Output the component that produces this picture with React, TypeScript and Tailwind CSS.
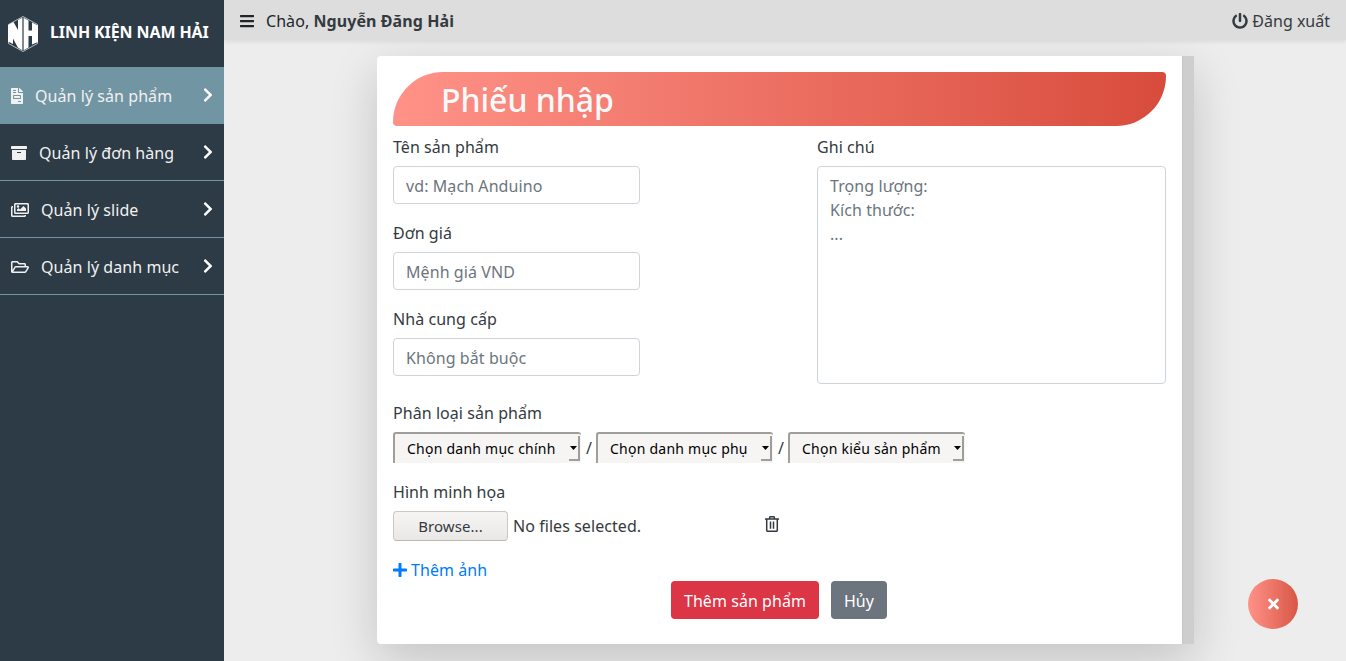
import React from "react";
import {
  FaArchive,
  FaBars,
  FaChevronRight,
  FaFileInvoice,
  FaPlus,
  FaPowerOff,
  FaRegFolderOpen,
  FaRegImages,
  FaTimes,
} from "react-icons/fa";

const menu = [
  { label: "Quản lý sản phẩm", Icon: FaFileInvoice, iconClass: "w-3", active: true },
  { label: "Quản lý đơn hàng", Icon: FaArchive, iconClass: "w-4", active: false },
  { label: "Quản lý slide", Icon: FaRegImages, iconClass: "w-[18px]", active: false },
  { label: "Quản lý danh mục", Icon: FaRegFolderOpen, iconClass: "w-[18px]", active: false },
];

const categories = [
  { label: "Chọn danh mục chính", width: "w-[188px]" },
  { label: "Chọn danh mục phụ", width: "w-[177px]" },
  { label: "Chọn kiểu sản phẩm", width: "w-[177px]" },
];

function Logo() {
  return (
    <svg viewBox="0 0 30 36" className="h-9 w-[30px] shrink-0">
      <path d="M15 0.5 29.5 8.5V27.5L15 35.5 0.5 27.5V8.5Z" fill="none" stroke="#d5dadd" strokeWidth="0.8" />
      <path d="M0 9 5.500 6 10 14V4L14.400 1.800V34.200L10 31.800 5 22.500V28L0 25.500Z" fill="#fff" />
      <path d="M15.600 1.800 20.500 4.500V14.500H24V6.500L30 9.500V26L24 28.500V20H20.500V31.500L15.600 34.200Z" fill="#fff" />
    </svg>
  );
}

function TrashIcon() {
  return (
    <svg viewBox="0 0 14 16" className="h-4 w-3.5" fill="none" stroke="#343a40" strokeWidth="1.5">
      <path d="M0 3H14M4.300 2.700 5 .8H9L9.700 2.700M1.700 3V14.200Q1.700 15.300 2.800 15.300H11.200Q12.300 15.300 12.300 14.200V3M5.500 5.500V12.800M8.500 5.500V12.800" />
    </svg>
  );
}

function Field({ label, placeholder }: { label: string; placeholder: string }) {
  return (
    <label className="mb-[17px] block">
      <span className="mb-[7px] block leading-6">{label}</span>
      <input
        placeholder={placeholder}
        className="block h-[38px] w-[247px] rounded border border-[#ced4da] bg-white px-3 pt-[7px] pb-[5px] tracking-[0.08px] placeholder:text-[#6c757d]"
      />
    </label>
  );
}

function CategorySelect({ label, width }: { label: string; width: string }) {
  return (
    <button
      type="button"
      className={`${width} flex h-[31px] items-start justify-between rounded-t-[3px] border-t-2 border-l-2 border-[#a09e9c] bg-[#f6f5f4] pl-3 text-left text-sm text-black`}
    >
      <span className="pt-[5px] leading-5 tracking-[0.24px] whitespace-nowrap">{label}</span>
      <span className="mt-0.5 mr-[1px] -ml-2 flex h-[25px] w-[11px] items-start justify-center border-r-2 border-b-2 border-[#a09e9c] pt-[10px]">
        <svg viewBox="0 0 7 4" className="h-1 w-[7px] shrink-0">
          <path d="M0 0H7L3.500 4Z" fill="#000" />
        </svg>
      </span>
    </button>
  );
}

export default function App() {
  return (
    <div className="flex h-[661px] w-full overflow-hidden bg-[#ededed] font-['Noto_Sans',sans-serif] text-base leading-6 tracking-[0.06px] text-[#343a40]">
      <aside className="w-56 shrink-0 bg-[#2c3b45] text-[#f1f1f1]">
        <div className="flex h-[67px] items-center gap-3 pl-2 font-bold text-white">
          <Logo />
          <span className="pb-[3px] tracking-[-0.1px] whitespace-nowrap">LINH KIỆN NAM HẢI</span>
        </div>
        <nav>
          {menu.map(({ label, Icon, iconClass, active }) => (
            <a
              key={label}
              className={`flex h-[57px] items-center border-b border-[#7195a3] px-[11px] ${active ? "bg-[#7195a3]" : ""}`}
            >
              <Icon className={`${iconClass} mt-0.5 mr-3 h-4 shrink-0`} />
              <span className="pt-0.5">{label}</span>
              <FaChevronRight className="mb-px ml-auto h-4 w-[10px] text-white" />
            </a>
          ))}
        </nav>
      </aside>

      <div className="flex min-w-0 flex-1 flex-col">
        <header className="z-10 flex h-10 shrink-0 items-center bg-[#ddd] pr-4 pl-4 shadow-[0_2px_4px_rgba(0,0,0,0.075)]">
          <FaBars className="mt-0.5 mr-3 h-4 w-3.5 text-[#212529]" />
          <span className="pt-0.5 text-[#212529]">
            Chào, <b className="tracking-[0.08px] text-[#343a40]">Nguyễn Đăng Hải</b>
          </span>
          <a className="ml-auto flex items-center gap-1">
            <FaPowerOff className="mt-0.5 h-4 w-4" />
            <span className="pt-0.5 tracking-normal">Đăng xuất</span>
          </a>
        </header>

        <main className="relative flex-1 pt-4 pl-[153px]">
          <section className="flex h-[588px] w-[817px] overflow-hidden rounded-l bg-white shadow-[0_16px_48px_rgba(0,0,0,0.176)]">
            <form className="flex w-[805px] flex-col p-4">
              <h1 className="h-[54px] shrink-0 rounded-[50px_4px_50px_4px] bg-linear-to-r from-[#ff9288] to-[#d84b3c] pt-[9px] pl-12 text-[32px] leading-[38px] font-medium tracking-[-0.05px] text-[#f8f9fa]">
                Phiếu nhập
              </h1>
              <div className="flex justify-between pt-[9px]">
                <div>
                  <Field label="Tên sản phẩm" placeholder="vd: Mạch Anduino" />
                  <Field label="Đơn giá" placeholder="Mệnh giá VND" />
                  <Field label="Nhà cung cấp" placeholder="Không bắt buộc" />
                </div>
                <label className="block">
                  <span className="mb-[7px] block">Ghi chú</span>
                  <textarea
                    placeholder={"Trọng lượng:\nKích thước:\n..."}
                    className="block h-[218px] w-[349px] resize-none rounded border border-[#ced4da] px-3 pt-[7px] pb-1 tracking-[0.08px] placeholder:text-[#6c757d]"
                  />
                </label>
              </div>
              <div className="mt-2">Phân loại sản phẩm</div>
              <div className="mt-[7px] flex h-[31px] items-center">
                {categories.map(({ label, width }, index) => (
                  <React.Fragment key={label}>
                    {index > 0 && <span className="w-[15px] pl-px text-center">/</span>}
                    <CategorySelect label={label} width={width} />
                  </React.Fragment>
                ))}
              </div>
              <div className="mt-[17px]">Hình minh họa</div>
              <div className="mt-[7px] flex h-[30px] items-center">
                <button
                  type="button"
                  className="h-[30px] w-[115px] rounded border border-[#cdc7c2] border-b-[#bfb8b1] bg-linear-to-b from-[#f6f5f4] to-[#eae8e6] text-[15px]"
                >
                  Browse...
                </button>
                <span className="ml-[5px] w-[252px]">No files selected.</span>
                <span className="pb-1">
                  <TrashIcon />
                </span>
              </div>
              <a className="mt-[17px] flex items-center gap-1 text-[#007bff]">
                <FaPlus className="h-4 w-3.5" />
                Thêm ảnh
              </a>
              <div className="-mt-px flex gap-3 pl-[278px] text-white">
                <button type="button" className="h-[38px] w-[148px] rounded bg-[#dc3545] pt-0.5">
                  Thêm sản phẩm
                </button>
                <button type="button" className="h-[38px] w-14 rounded bg-[#6c757d] pt-0.5">
                  Hủy
                </button>
              </div>
            </form>
            <div className="w-3 border-l border-[#cdc7c2] bg-[#cecece]" />
          </section>
          <button
            type="button"
            aria-label="Đóng"
            className="absolute top-[539px] right-12 flex size-[50px] items-center justify-center rounded-full bg-linear-to-r from-[#ff9288] to-[#d85645] text-white"
          >
            <FaTimes className="h-4 w-[11px]" />
          </button>
        </main>
      </div>
    </div>
  );
}
